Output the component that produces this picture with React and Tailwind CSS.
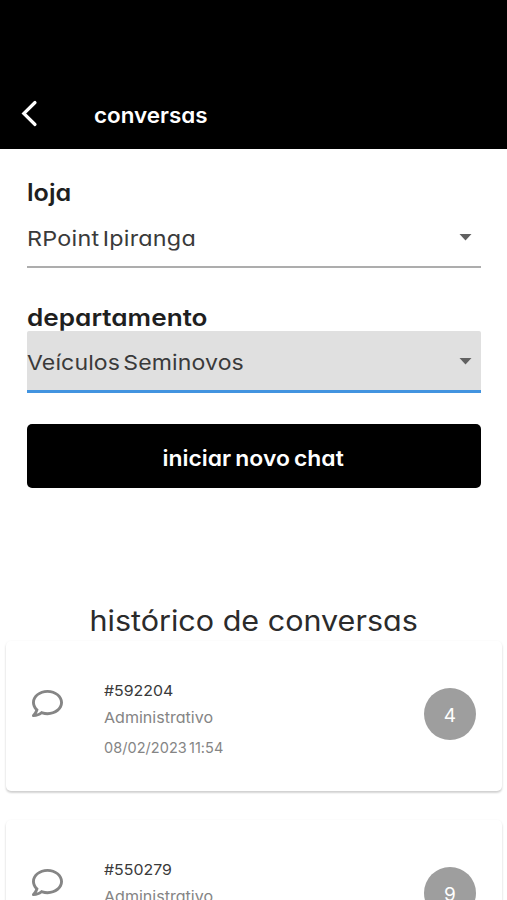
import { useState } from "react";
import { FaRegComment } from "react-icons/fa";

const conversas = [
  { id: "592204", departamento: "Administrativo", data: "08/02/2023 11:54", total: 4 },
  { id: "550279", departamento: "Administrativo", data: "", total: 9 },
];

function Campo({ label, valor, ativo, onClick, labelClass, valorClass }) {
  return (
    <div>
      <div className="h-[32px] leading-[37px] text-[24px] font-semibold text-[#1f1f1f]">
        <span className={"inline-block origin-left " + labelClass}>{label}</span>
      </div>
      <button type="button" onClick={onClick}
        className={"flex w-full h-[62px] items-center justify-between pr-[9px] text-left rounded-t-[2px] " + (
          ativo ? "bg-[#e0e0e0] border-b-[3px] border-[#4294e0]" : "border-b-2 border-[#adadad]"
        )}>
        <span className={"inline-block origin-left text-[20.5px] leading-[28px] text-[#3a3a3a] pt-[5px] [word-spacing:-3px] " + valorClass}>{valor}</span>
        <svg width="13" height="7" viewBox="0 0 13 7" className="mt-[2px]">
          <path d="M0.5 0H12.5L6.5 6.5Z" fill="#616161" />
        </svg>
      </button>
    </div>
  );
}

function Conversa({ conversa }) {
  return (
    <div className="flex h-[150px] mb-[29px] pl-[26px] pr-[26px] rounded-[5px] bg-white shadow-[0_2px_2px_rgba(0,0,0,0.13),0_1px_3px_rgba(0,0,0,0.09)]">
      <FaRegComment size={31} className="mt-[47px] shrink-0 text-[#858585]" />
      <div className="ml-[41px] pt-[40px] flex-1 text-[15px] text-[#858585]">
        <p className="h-[20px] leading-[20px] text-[#3a3a3a]"><span className="inline-block origin-left scale-x-[1.06]">#{conversa.id}</span></p>
        <p className="mt-[6px] h-[20px] leading-[21px]"><span className="inline-block origin-left scale-x-[1.07]">{conversa.departamento}</span></p>
        <p className="mt-[11px] h-[20px] leading-[20px] text-[14.5px]"><span className="tracking-[0.05px] [word-spacing:-2px]">{conversa.data}</span></p>
      </div>
      <div className="mt-[47px] flex size-[52px] items-center justify-center rounded-full bg-[#9e9e9e] pt-[5px] text-[19px] text-white">
        {conversa.total}
      </div>
    </div>
  );
}

function App() {
  const [ativo, setAtivo] = useState("departamento");

  return (
    <div className="h-[900px] w-full overflow-hidden bg-white font-['Inter','Open_Sans',sans-serif] [font-feature-settings:'cv11']">
      <header className="flex h-[149px] items-end bg-black pb-[19px] text-white">
        <svg width="18" height="28" viewBox="0 0 18 28" className="ml-[20px] mb-[3px]" fill="none" stroke="currentColor" strokeWidth="3.2" strokeLinecap="round">
          <path d="M15 3.5L3.8 14.5L15 25.5" />
        </svg>
        <h1 className="ml-[55.5px] text-[22px] leading-[30px] font-semibold">
          <span className="inline-block origin-left scale-x-[1.02]">conversas</span>
        </h1>
      </header>

      <main>
        <section className="flex flex-col gap-[31px] px-[26.5px] pt-[25px]">
          <Campo label="loja" valor="RPoint Ipiranga" ativo={ativo === "loja"}
            onClick={() => setAtivo("loja")} labelClass="scale-x-[1.05]" valorClass="scale-x-[1.14] tracking-[0.2px]" />
          <Campo label="departamento" valor="Veículos Seminovos" ativo={ativo === "departamento"}
            onClick={() => setAtivo("departamento")} labelClass="scale-x-[1.09]" valorClass="scale-x-[1.125] tracking-[0.1px]" />
          <button type="button" className="h-[64px] rounded-[5px] bg-black pt-[5px] text-[22px] font-semibold text-white">
            <span className="inline-block scale-x-[1.04] [word-spacing:-1.5px]">iniciar novo chat</span>
          </button>
        </section>

        <h2 className="mt-[112px] h-[41px] text-center text-[28px] leading-[42px] text-[#2b2b2b]">
          <span className="inline-block scale-x-[1.09]">histórico de conversas</span>
        </h2>

        <section className="pl-[6px] pr-[5px]">
          {conversas.map((c) => (
            <Conversa key={c.id} conversa={c} />
          ))}
        </section>
      </main>
    </div>
  );
}

export default App;
